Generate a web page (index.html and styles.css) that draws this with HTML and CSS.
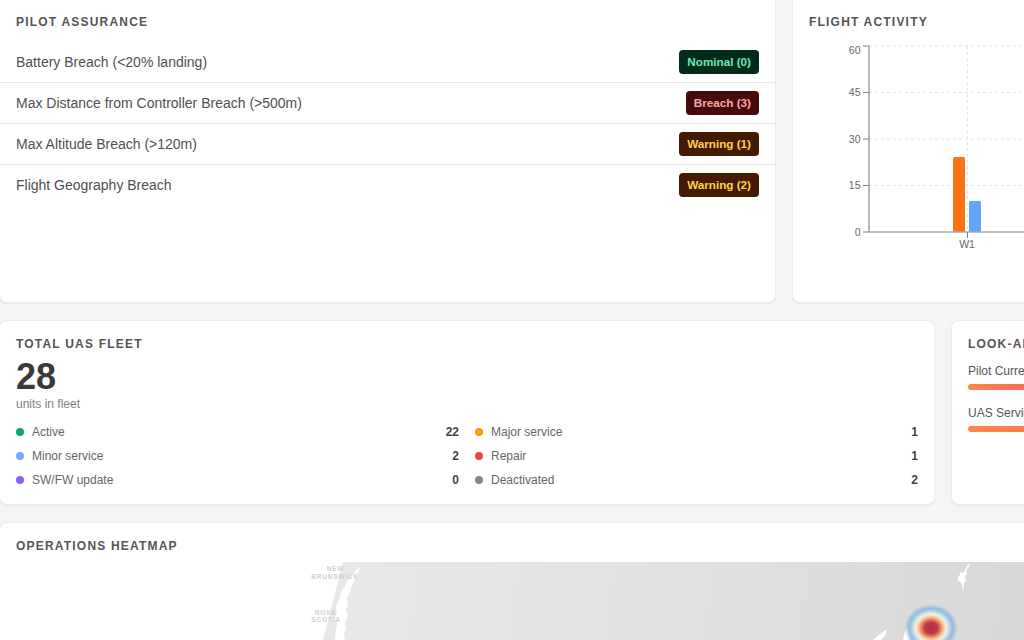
FILE: index.html
```html
<!DOCTYPE html>
<html lang="en">
<head>
<meta charset="utf-8">
<title>Dashboard</title>
<link rel="stylesheet" href="styles.css">
</head>
<body>
<main class="page">
  <section class="row row-top">
    <article class="card assurance">
      <h2 class="card-title">PILOT ASSURANCE</h2>
      <ul class="checks">
        <li class="check"><span>Battery Breach (&lt;20% landing)</span><span class="badge nominal">Nominal (0)</span></li>
        <li class="check"><span>Max Distance from Controller Breach (&gt;500m)</span><span class="badge breach">Breach (3)</span></li>
        <li class="check"><span>Max Altitude Breach (&gt;120m)</span><span class="badge warning">Warning (1)</span></li>
        <li class="check"><span>Flight Geography Breach</span><span class="badge warning">Warning (2)</span></li>
      </ul>
    </article>
    <article class="card activity">
      <h2 class="card-title">FLIGHT ACTIVITY</h2>
      <svg class="chart" width="600" height="230" viewBox="793 30 600 230">
        <g class="grid">
          <line x1="869" x2="1393" y1="46" y2="46"/>
          <line x1="869" x2="1393" y1="92.5" y2="92.5"/>
          <line x1="869" x2="1393" y1="139" y2="139"/>
          <line x1="869" x2="1393" y1="185.5" y2="185.5"/>
          <line x1="967.5" x2="967.5" y1="46" y2="232"/>
        </g>
        <rect class="bar-orange" x="953" y="157" width="12" height="75" rx="1.5"/>
        <rect class="bar-blue" x="969" y="201" width="12" height="31" rx="1.5"/>
        <g class="axis">
          <line x1="869" x2="869" y1="45.5" y2="232"/>
          <line x1="869" x2="1393" y1="232" y2="232"/>
        </g>
        <g class="ticks">
          <line x1="863" x2="869" y1="46" y2="46"/>
          <line x1="863" x2="869" y1="92.5" y2="92.5"/>
          <line x1="863" x2="869" y1="139" y2="139"/>
          <line x1="863" x2="869" y1="185.5" y2="185.5"/>
          <line x1="863" x2="869" y1="232" y2="232"/>
          <line x1="967.5" x2="967.5" y1="232" y2="238"/>
        </g>
        <g class="chart-text">
          <text x="860.5" y="54" text-anchor="end">60</text>
          <text x="860.5" y="96" text-anchor="end">45</text>
          <text x="860.5" y="143" text-anchor="end">30</text>
          <text x="860.5" y="189" text-anchor="end">15</text>
          <text x="860.5" y="236" text-anchor="end">0</text>
          <text x="967" y="248" text-anchor="middle">W1</text>
        </g>
      </svg>
    </article>
  </section>
  <section class="row row-mid">
    <article class="card fleet">
      <h2 class="card-title">TOTAL UAS FLEET</h2>
      <div class="big-num">28</div>
      <div class="big-sub">units in fleet</div>
      <ul class="fleet-list">
        <li class="fleet-item"><i class="dot d-green"></i><span class="fleet-label">Active</span><b>22</b></li>
        <li class="fleet-item"><i class="dot d-amber"></i><span class="fleet-label">Major service</span><b>1</b></li>
        <li class="fleet-item"><i class="dot d-blue"></i><span class="fleet-label">Minor service</span><b>2</b></li>
        <li class="fleet-item"><i class="dot d-red"></i><span class="fleet-label">Repair</span><b>1</b></li>
        <li class="fleet-item"><i class="dot d-violet"></i><span class="fleet-label">SW/FW update</span><b>0</b></li>
        <li class="fleet-item"><i class="dot d-grey"></i><span class="fleet-label">Deactivated</span><b>2</b></li>
      </ul>
    </article>
    <article class="card lookahead">
      <h2 class="card-title">LOOK-AHEAD</h2>
      <div class="meter"><div class="meter-label">Pilot Currency</div><div class="meter-bar bar-hot"></div></div>
      <div class="meter"><div class="meter-label">UAS Service</div><div class="meter-bar bar-warm"></div></div>
    </article>
  </section>
  <section class="card heatmap">
    <h2 class="card-title">OPERATIONS HEATMAP</h2>
    <div class="map">
      <svg class="map-svg" width="1040" height="78" viewBox="0 562 1040 78">
        <defs>
          <linearGradient id="sea" gradientUnits="userSpaceOnUse" x1="340" x2="1024" y1="562" y2="640">
            <stop offset="0" stop-color="#e8e8e8"/>
            <stop offset="1" stop-color="#d8d8d8"/>
          </linearGradient>
          <radialGradient id="heat">
            <stop offset="0" stop-color="#bd2d45"/>
            <stop offset="0.24" stop-color="#c03a4a"/>
            <stop offset="0.36" stop-color="#e8805f"/>
            <stop offset="0.47" stop-color="#f6c9a0"/>
            <stop offset="0.58" stop-color="#f5efe2"/>
            <stop offset="0.7" stop-color="#b4d6ea"/>
            <stop offset="0.82" stop-color="#7fb2da" stop-opacity="0.75"/>
            <stop offset="1" stop-color="#8ab6da" stop-opacity="0"/>
          </radialGradient>
        </defs>
        <path class="sea" d="M343 562H1040V640H323Z"/>
        <path class="land" d="M360 567L356 570L353 575L348 580L345 586L341 592L339 600L336 607L337 612L335 618L337 624L336 630L335 640H345L344 634L346 628L345 622L348 616L346 610L348 604L347 598L350 592L352 585L355 580L358 574Z"/>
        <path class="land" d="M970 563L969 567L967 569L966 571L967 574L965 576L966 581L964 583L963.5 590L962.5 590L962 584L960 582L957.5 580L958.5 576L960 575L960 572L963 573L965 570L967 566Z"/>
        <path class="land" d="M887 629L885 636L881 640H873L880 634Z"/>
        <path class="land" d="M908 627L905 631L903 640H910Z"/>
        <ellipse cx="931" cy="628" rx="27" ry="24" fill="url(#heat)"/>
        <g class="map-text">
          <text x="335.5" y="571" text-anchor="middle">NEW</text>
          <text x="335" y="579" text-anchor="middle">BRUNSWICK</text>
          <text x="325.5" y="615" text-anchor="middle">NOVA</text>
          <text x="326" y="622" text-anchor="middle">SCOTIA</text>
        </g>
      </svg>
    </div>
  </section>
</main>
</body>
</html>
```

FILE: styles.css
```css
* { box-sizing: border-box; }
html, body { margin: 0; height: 100%; }
body {
  height: 640px;
  overflow: hidden;
  background: #f5f5f5;
  font-family: "Liberation Sans", Arial, sans-serif;
  color: #444;
}
.page {
  display: flex;
  flex-direction: column;
  gap: 17px;
  width: 1400px;
  margin-top: -20px;
}
.row { display: flex; gap: 16px; }
.card {
  background: #fff;
  border: 1px solid #ececec;
  border-radius: 8px;
  box-shadow: 0 1px 2px rgba(0,0,0,.06);
  padding: 16px;
  margin-left: -1px;
}
.row .card + .card { margin-left: 0; }
.card-title {
  margin: 0;
  font-size: 12px;
  line-height: 14px;
  font-weight: 700;
  letter-spacing: 1.2px;
  color: #555;
}
.row-top .card { height: 323px; padding-top: 34px; }
.assurance { width: 777px; }
.activity { flex: 1; }
.checks { list-style: none; margin: 13px -16px 0; padding: 0; }
.check {
  display: flex;
  justify-content: space-between;
  align-items: center;
  height: 41px;
  padding: 0 16px;
  border-bottom: 1px solid #e8e8e8;
  font-size: 14px;
  color: #505050;
}
.check:last-child { border-bottom-color: transparent; }
.badge {
  height: 24px;
  line-height: 24px;
  padding: 0 8px;
  border-radius: 4px;
  font-size: 11.7px;
  font-weight: 700;
}
.nominal { background: #022c17; color: #6ee7b7; }
.breach { background: #450a0a; color: #fca5a5; }
.warning { background: #451a03; color: #fcd34d; }
.chart { display: block; margin: 1px -16px 0; }
.grid line { stroke: #e5e5e5; stroke-width: 1; stroke-dasharray: 3 3; }
.axis line { stroke: #a8a8a8; stroke-width: 1.6; }
.ticks line { stroke: #808080; stroke-width: 1; }
.chart-text text { font-size: 10.5px; fill: #666; }
.bar-orange { fill: #f97316; }
.bar-blue { fill: #60a5fa; }
.row-mid .card { height: 185px; }
.fleet { width: 936px; }
.lookahead { flex: 1; }
.big-num {
  font-size: 36px;
  line-height: 38px;
  font-weight: 700;
  color: #3a3a3a;
  margin-top: 7px;
}
.big-sub { font-size: 12px; line-height: 16px; color: #808080; }
.fleet-list {
  list-style: none;
  margin: 8px 0 0;
  padding: 0;
  display: grid;
  grid-template-columns: 1fr 1fr;
  column-gap: 16px;
}
.fleet-item {
  display: flex;
  align-items: center;
  height: 24px;
  font-size: 12px;
  color: #666;
}
.fleet-label { flex: 1; }
.fleet-item b { color: #444; font-weight: 700; }
.dot { width: 8px; height: 8px; border-radius: 50%; margin-right: 8px; }
.d-green { background: #10a36f; }
.d-amber { background: #f59e0b; }
.d-blue { background: #75a7fb; }
.d-red { background: #ef4444; }
.d-violet { background: #8b5cf6; }
.d-grey { background: #888; }
.meter { margin-top: 12px; }
.meter + .meter { margin-top: 15px; }
.meter-label { font-size: 12px; line-height: 16px; color: #555; }
.meter-bar {
  height: 6px;
  margin-top: 5px;
  width: 300px;
  border-radius: 3px;
}
.bar-hot { background: linear-gradient(90deg, #fb8a4c, #f87155 40px); }
.bar-warm { background: linear-gradient(90deg, #fb8a4c, #fa7c50 60px); }
.heatmap { padding-bottom: 0; padding-right: 0; height: 200px; }
.map { margin: 9px 0 0 -16px; }
.map-svg { display: block; }
.sea { fill: url(#sea); }
.land { fill: #fff; }
.map-text text {
  font-size: 6.5px;
  font-weight: 700;
  letter-spacing: 0.8px;
  fill: #cfcfcf;
}
```
